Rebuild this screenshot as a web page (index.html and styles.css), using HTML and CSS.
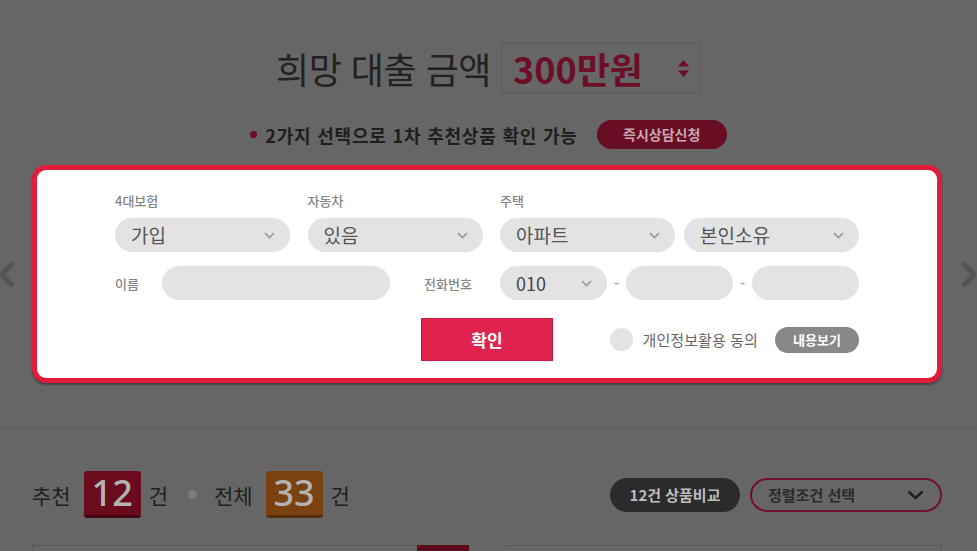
FILE: index.html
```html
<!DOCTYPE html>
<html lang="ko">
<head>
<meta charset="utf-8">
<title>대출 추천</title>
<link rel="stylesheet" href="styles.css">
</head>
<body>
<div class="page">
  <section class="hero">
    <div class="amount-row">
      <h1 class="amount-title">희망 대출 금액</h1>
      <div class="amount-select">
        <span class="amount-value">300만원</span>
        <svg class="updown" width="11" height="17" viewBox="0 0 11 17"><path d="M5.5 0L11 6.5H0z M0 10.5H11L5.5 17z" fill="#6c0e26"/></svg>
      </div>
    </div>
    <div class="notice-row">
      <span class="notice-dot"></span>
      <span class="notice-text">2가지 선택으로 1차 추천상품 확인 가능</span>
      <span class="consult-btn">즉시상담신청</span>
    </div>
  </section>

  <div class="modal">
    <div class="form">
      <div class="row-selects">
        <div class="field">
          <div class="field-label">4대보험</div>
          <div class="select"><span>가입</span><svg class="chev" width="11" height="7" viewBox="0 0 11 7"><path d="M1 1l4.5 4.5L10 1" fill="none" stroke="#999" stroke-width="1.6"/></svg></div>
        </div>
        <div class="field">
          <div class="field-label">자동차</div>
          <div class="select"><span>있음</span><svg class="chev" width="11" height="7" viewBox="0 0 11 7"><path d="M1 1l4.5 4.5L10 1" fill="none" stroke="#999" stroke-width="1.6"/></svg></div>
        </div>
        <div class="field">
          <div class="field-label">주택</div>
          <div class="pair">
            <div class="select"><span>아파트</span><svg class="chev" width="11" height="7" viewBox="0 0 11 7"><path d="M1 1l4.5 4.5L10 1" fill="none" stroke="#999" stroke-width="1.6"/></svg></div>
            <div class="select"><span>본인소유</span><svg class="chev" width="11" height="7" viewBox="0 0 11 7"><path d="M1 1l4.5 4.5L10 1" fill="none" stroke="#999" stroke-width="1.6"/></svg></div>
          </div>
        </div>
      </div>

      <div class="row-inputs">
        <span class="inline-label name-label">이름</span>
        <div class="text-input name-input"></div>
        <span class="inline-label phone-label">전화번호</span>
        <div class="phone">
          <div class="select select-small"><span>010</span><svg class="chev" width="11" height="7" viewBox="0 0 11 7"><path d="M1 1l4.5 4.5L10 1" fill="none" stroke="#999" stroke-width="1.6"/></svg></div>
          <span class="dash">-</span>
          <div class="text-input phone-input"></div>
          <span class="dash">-</span>
          <div class="text-input phone-input"></div>
        </div>
      </div>

      <div class="row-actions">
        <span class="confirm-btn">확인</span>
        <div class="agree">
          <span class="check"></span>
          <span class="agree-text">개인정보활용 동의</span>
          <span class="view-btn">내용보기</span>
        </div>
      </div>
    </div>
  </div>

  <section class="results">
    <div class="summary">
      <div class="counts">
        <span class="count-label">추천</span>
        <span class="badge badge-red">12</span>
        <span class="count-unit">건</span>
        <span class="sep-dot"></span>
        <span class="count-label">전체</span>
        <span class="badge badge-orange">33</span>
        <span class="count-unit">건</span>
      </div>
      <div class="tools">
        <span class="compare-btn">12건 상품비교</span>
        <div class="sort-select">
          <span>정렬조건 선택</span>
          <svg width="17" height="10" viewBox="0 0 17 10"><path d="M1.5 1.5l7 6.5 7-6.5" fill="none" stroke="#1f1f1f" stroke-width="2.6"/></svg>
        </div>
      </div>
    </div>
    <div class="cards">
      <div class="card"><span class="card-tab"></span></div>
      <div class="card"></div>
    </div>
  </section>
</div>

<span class="nav-arrow nav-prev"><svg width="16" height="27" viewBox="0 0 16 27"><path d="M12.5 3.5L3 13.5l9.5 10" fill="none" stroke="#545454" stroke-width="5" stroke-linecap="round" stroke-linejoin="round"/></svg></span>
<span class="nav-arrow nav-next"><svg width="16" height="27" viewBox="0 0 16 27"><path d="M3.5 3.5L13 13.5l-9.5 10" fill="none" stroke="#545454" stroke-width="5" stroke-linecap="round" stroke-linejoin="round"/></svg></span>
</body>
</html>
```

FILE: styles.css
```css
html, body {
  margin: 0;
  padding: 0;
  overflow: hidden;
  height: 100%;
}
body {
  background: #666666;
  font-family: "Noto Sans CJK KR", "Noto Sans", sans-serif;
  color: #222;
  position: relative;
}
.page {
  width: 977px;
}

/* hero */
.hero {
  padding-top: 42px;
}
.amount-row {
  display: flex;
  justify-content: center;
  align-items: center;
  gap: 10px;
  height: 52px;
}
.amount-title {
  margin: 0;
  font-size: 36px;
  font-weight: 400;
  color: #222;
  line-height: 52px;
  letter-spacing: -0.5px;
}
.amount-select {
  box-sizing: border-box;
  width: 200px;
  height: 52px;
  border: 1px solid #5b5b5b;
  display: flex;
  align-items: center;
  justify-content: space-between;
  padding: 0 11px 0 11px;
}
.amount-value {
  font-size: 36px;
  font-weight: 700;
  color: #6c0e26;
  line-height: 50px;
}
.notice-row {
  margin-top: 26px;
  height: 29px;
  display: flex;
  justify-content: center;
  align-items: center;
}
.notice-dot {
  width: 7px;
  height: 7px;
  border-radius: 50%;
  background: #6e0d24;
  margin-right: 8px;
}
.notice-text {
  font-size: 18px;
  font-weight: 700;
  color: #1e1e1e;
  letter-spacing: 0.8px;
}
.consult-btn {
  margin-left: 19px;
  box-sizing: border-box;
  width: 130px;
  height: 29px;
  line-height: 29px;
  text-align: center;
  border-radius: 15px;
  background: #690d24;
  color: #c7a8b1;
  font-size: 14px;
  font-weight: 700;
}

/* modal */
.modal {
  box-sizing: border-box;
  margin: 16px 35px 0 32px;
  height: 218px;
  border: 5px solid #e31b3b;
  border-radius: 14px;
  background: #fff;
  box-shadow: 0 2px 2px rgba(0, 0, 0, 0.35);
  padding: 22px 0 0;
}
.form {
  width: 744px;
  margin: 0 auto;
}
.row-selects {
  display: grid;
  grid-template-columns: 175px 175px 359px;
  column-gap: 17.5px;
}
.field-label {
  font-size: 13px;
  line-height: 18px;
  color: #858585;
  margin-bottom: 8px;
  font-weight: 500;
}
.pair {
  display: flex;
  gap: 9px;
}
.pair .select {
  flex: 0 0 175px;
}
.select {
  box-sizing: border-box;
  height: 34px;
  border-radius: 17px;
  background: #e3e3e3;
  display: flex;
  align-items: center;
  justify-content: space-between;
  padding: 0 15px 0 16px;
  font-size: 19px;
  color: #555;
}
.select span {
  line-height: 34px;
}
.select-small {
  width: 107px;
  flex: 0 0 107px;
  font-size: 18px;
  color: #444;
  padding-right: 15px;
}
.chev {
  display: block;
}

.row-inputs {
  margin-top: 14px;
  display: flex;
  align-items: center;
  height: 34px;
}
.inline-label {
  font-size: 13px;
  color: #858585;
  font-weight: 500;
}
.name-label {
  width: 47px;
}
.text-input {
  box-sizing: border-box;
  height: 34px;
  border-radius: 17px;
  background: #e3e3e3;
}
.name-input {
  width: 228px;
}
.phone-label {
  margin-left: 34px;
  width: 76px;
}
.phone {
  display: flex;
  align-items: center;
  width: 359px;
}
.dash {
  width: 19px;
  text-align: center;
  color: #999;
  font-size: 16px;
}
.phone-input {
  width: 107px;
}

.row-actions {
  margin-top: 18px;
  display: grid;
  grid-template-columns: 1fr 132px 1fr;
  align-items: center;
  height: 43px;
}
.confirm-btn {
  grid-column: 2;
  box-sizing: border-box;
  height: 43px;
  border: 1px solid #c81b44;
  background: #e0224f;
  color: #fff;
  font-size: 17px;
  font-weight: 700;
  display: flex;
  align-items: center;
  justify-content: center;
}
.agree {
  grid-column: 3;
  justify-self: end;
  display: flex;
  align-items: center;
}
.check {
  width: 23px;
  height: 23px;
  border-radius: 50%;
  background: #e3e3e3;
  margin-right: 9px;
}
.agree-text {
  font-size: 15px;
  color: #666;
  letter-spacing: 0.1px;
}
.view-btn {
  margin-left: 17px;
  width: 84px;
  height: 26px;
  line-height: 26px;
  border-radius: 13px;
  background: #888;
  color: #fff;
  text-align: center;
  font-size: 13px;
  font-weight: 700;
}

/* results */
.results {
  margin-top: 44px;
  border-top: 1px solid #5a5a5a;
  padding: 43px 35px 0 32px;
}
.summary {
  display: flex;
  justify-content: space-between;
  align-items: center;
  height: 47px;
}
.counts {
  display: flex;
  align-items: center;
}
.count-label,
.count-unit {
  font-size: 21px;
  color: #1e1e1e;
}
.badge {
  box-sizing: border-box;
  width: 57px;
  height: 47px;
  border-radius: 3px;
  margin: 0 8px 0 13px;
  text-align: center;
  font-family: "Noto Sans", "Open Sans", sans-serif;
  font-size: 36px;
  line-height: 44px;
  font-weight: 500;
  color: #b3b3b3;
}
.badge-red {
  background: linear-gradient(#6a0c1d 0, #6a0c1d 49%, #5a0a18 50%, #6a0c1d 52%, #6a0c1d 100%);
  border-bottom: 3px solid #440611;
}
.badge-orange {
  background: linear-gradient(#7a420f 0, #7a420f 49%, #6a380c 50%, #7a420f 52%, #7a420f 100%);
  border-bottom: 3px solid #55300a;
}
.sep-dot {
  width: 9px;
  height: 9px;
  border-radius: 50%;
  background: #7c7c7c;
  margin: 0 17px 0 20px;
}
.tools {
  display: flex;
  align-items: center;
  gap: 10px;
}
.compare-btn {
  width: 130px;
  height: 34px;
  line-height: 34px;
  border-radius: 17px;
  background: #2b2b2b;
  color: #bdbdbd;
  text-align: center;
  font-size: 15px;
  font-weight: 700;
}
.sort-select {
  box-sizing: border-box;
  width: 192px;
  height: 34px;
  border: 2px solid #721028;
  border-radius: 17px;
  display: flex;
  align-items: center;
  justify-content: space-between;
  padding: 0 16px 0 16px;
  font-size: 15px;
  font-weight: 700;
  color: #2a2a2a;
}
.sort-select svg {
  display: block;
}
.cards {
  margin-top: 27px;
  display: grid;
  grid-template-columns: 438px 437px;
  justify-content: space-between;
}
.card {
  box-sizing: border-box;
  height: 120px;
  border: 1px solid #5a5a5a;
  position: relative;
}
.card-tab {
  position: absolute;
  top: -1px;
  right: 0;
  width: 52px;
  height: 30px;
  background: #5e0b1b;
}

/* carousel arrows */
.nav-arrow {
  position: absolute;
  top: 261px;
}
.nav-arrow svg {
  display: block;
}
.nav-prev {
  left: -1px;
}
.nav-next {
  left: 961px;
}
```
